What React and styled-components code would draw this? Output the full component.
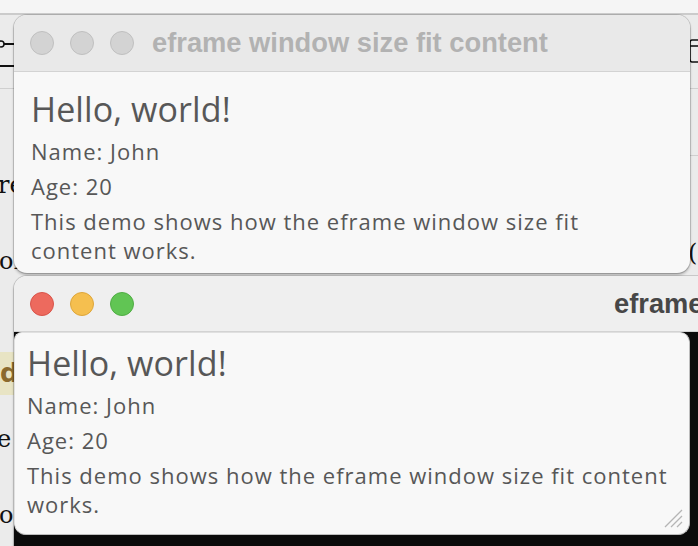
import styled, { createGlobalStyle } from 'styled-components';

const GlobalStyle = createGlobalStyle`
  html, body {
    margin: 0;
    padding: 0;
  }
  body {
    width: 698px;
    height: 546px;
    overflow: hidden;
    background: #ebebeb;
  }
`;

const Desktop = styled.div`
  position: relative;
  width: 698px;
  height: 546px;
  overflow: hidden;
  background: #ebebeb;
`;

const MenuStrip = styled.div`
  height: 13px;
  background: #f5f5f5;
  border-bottom: 2px solid #cbcbcb;
`;

// bits of the app behind the two windows
const Sketch = styled.svg`
  position: absolute;
  top: 0;
  left: ${(p) => p.$left}px;
`;

const BackText = styled.span`
  position: absolute;
  left: ${(p) => p.$left}px;
  top: ${(p) => p.$top}px;
  font-family: "DejaVu Serif", "Liberation Serif", serif;
  font-size: 24px;
  line-height: 30px;
  color: #111;
  white-space: nowrap;
`;

const Highlight = styled.span`
  position: absolute;
  left: 0;
  top: 352px;
  width: 18px;
  height: 43px;
  background: #e8e4c4;
  color: #8b6a2e;
  font-family: "DejaVu Sans", sans-serif;
  font-weight: 700;
  font-size: 26px;
  line-height: 43px;
`;

const Window = styled.div`
  position: absolute;
  left: 14px;
  top: ${(p) => p.$top}px;
  width: ${(p) => p.$width}px;
  height: ${(p) => p.$height}px;
  border-radius: 13px;
  overflow: hidden;
  display: flex;
  flex-direction: column;
  background: #f8f8f8;
  box-shadow: 0 0 0 1px rgba(0, 0, 0, 0.14), 0 2px 3px rgba(0, 0, 0, 0.28);
`;

const TitleBar = styled.div`
  flex: none;
  height: ${(p) => p.$height}px;
  display: flex;
  align-items: center;
  gap: 16px;
  padding-left: 16px;
  background: ${(p) => (p.$active ? '#efefef' : '#e9e9e9')};
  border-bottom: 1px solid #d3d3d3;
  box-sizing: border-box;
`;

const Light = styled.span`
  flex: none;
  width: 24px;
  height: 24px;
  border-radius: 50%;
  box-sizing: border-box;
  background: ${(p) => p.$color};
  border: 1px solid ${(p) => p.$edge};
`;

const Title = styled.span`
  flex: none;
  margin-left: ${(p) => p.$offset}px;
  font-family: "Liberation Sans", Arial, sans-serif;
  font-weight: 700;
  font-size: 27.3px;
  color: ${(p) => (p.$active ? '#474747' : '#b2b2b2')};
  white-space: nowrap;
`;

const Content = styled.div`
  flex: 1;
  display: flex;
  flex-direction: column;
  gap: 6px;
  padding: ${(p) => p.$pad};
  font-family: "Open Sans", "Noto Sans", sans-serif;
  color: #575757;
`;

const Heading = styled.div`
  font-size: 34px;
  line-height: 44px;
  letter-spacing: 0.1px;
`;

const Line = styled.div`
  font-size: 22px;
  line-height: 29px;
  letter-spacing: 1px;
  max-width: ${(p) => p.$max}px;
`;

const Viewport = styled.div`
  flex: 1;
  background: #0b0b0b;
`;

const Panel = styled.div`
  position: relative;
  width: 676px;
  height: 203px;
  box-sizing: border-box;
  border: 1px solid #bdbdbd;
  border-top-color: #e0e0e0;
  border-left-color: #e0e0e0;
  border-radius: 8px 10px 12px 12px;
  background: #f8f8f8;
  display: flex;
`;

const Grip = styled.svg`
  position: absolute;
  right: 6px;
  bottom: 6px;
`;

function TrafficLights({ active }) {
  if (!active) {
    return (
      <>
        <Light $color="#d3d3d3" $edge="#c0c0c0" />
        <Light $color="#d3d3d3" $edge="#c0c0c0" />
        <Light $color="#d3d3d3" $edge="#c0c0c0" />
      </>
    );
  }
  return (
    <>
      <Light $color="#ed6a5e" $edge="#d9544a" />
      <Light $color="#f5bf4f" $edge="#dea63a" />
      <Light $color="#61c554" $edge="#50ad44" />
    </>
  );
}

function Demo({ pad, max }) {
  return (
    <Content $pad={pad}>
      <Heading>Hello, world!</Heading>
      <Line>Name: John</Line>
      <Line>Age: 20</Line>
      <Line $max={max}>This demo shows how the eframe window size fit content works.</Line>
    </Content>
  );
}

export default function App() {
  return (
    <>
      <GlobalStyle />
      <Desktop>
        <MenuStrip />
        <Sketch $left={0} width="14" height="100" viewBox="0 0 14 100">
          <path d="M4 44 H14" stroke="#111" strokeWidth="2" />
          <circle cx="1" cy="44" r="3" fill="#ececec" stroke="#111" strokeWidth="1.5" />
          <path d="M0 66 H14" stroke="#111" strokeWidth="2" />
          <path d="M0 88.5 H14" stroke="#cfcfcf" strokeWidth="1" />
        </Sketch>
        <Sketch $left={688} width="10" height="160" viewBox="0 0 10 160">
          <path d="M10 40 H4 Q2 40 2 43 V59 Q2 62 4 62 H10" stroke="#111" strokeWidth="1.6" fill="none" />
          <path d="M2 46 H10" stroke="#111" strokeWidth="1.6" />
          <path d="M0 88.5 H10 M0 155.5 H10" stroke="#cfcfcf" strokeWidth="1" />
        </Sketch>
        <BackText $left={-2} $top={170}>re</BackText>
        <BackText $left={-1} $top={246}>or</BackText>
        <Highlight>d</Highlight>
        <BackText $left={-3} $top={424}>e</BackText>
        <BackText $left={-1} $top={500}>or</BackText>
        <BackText $left={688} $top={238}>(</BackText>

        <Window $top={15} $width={676} $height={258}>
          <TitleBar $height={57}>
            <TrafficLights />
            <Title $offset={2}>eframe window size fit content</Title>
          </TitleBar>
          <Demo pad="15px 16px 0 17px" max={600} />
        </Window>

        <Window $top={276} $width={760} $height={300}>
          <TitleBar $height={56} $active>
            <TrafficLights active />
            <Title $active $offset={464}>eframe window size fit content</Title>
          </TitleBar>
          <Viewport>
            <Panel>
              <Demo pad="8px 12px 0 12px" max={652} />
              <Grip width="20" height="20" viewBox="0 0 20 20">
                <path d="M2 19 L19 2 M8 19 L19 8 M14 19 L19 14" stroke="#b5b5b5" strokeWidth="1.3" fill="none" />
              </Grip>
            </Panel>
          </Viewport>
        </Window>
      </Desktop>
    </>
  );
}
